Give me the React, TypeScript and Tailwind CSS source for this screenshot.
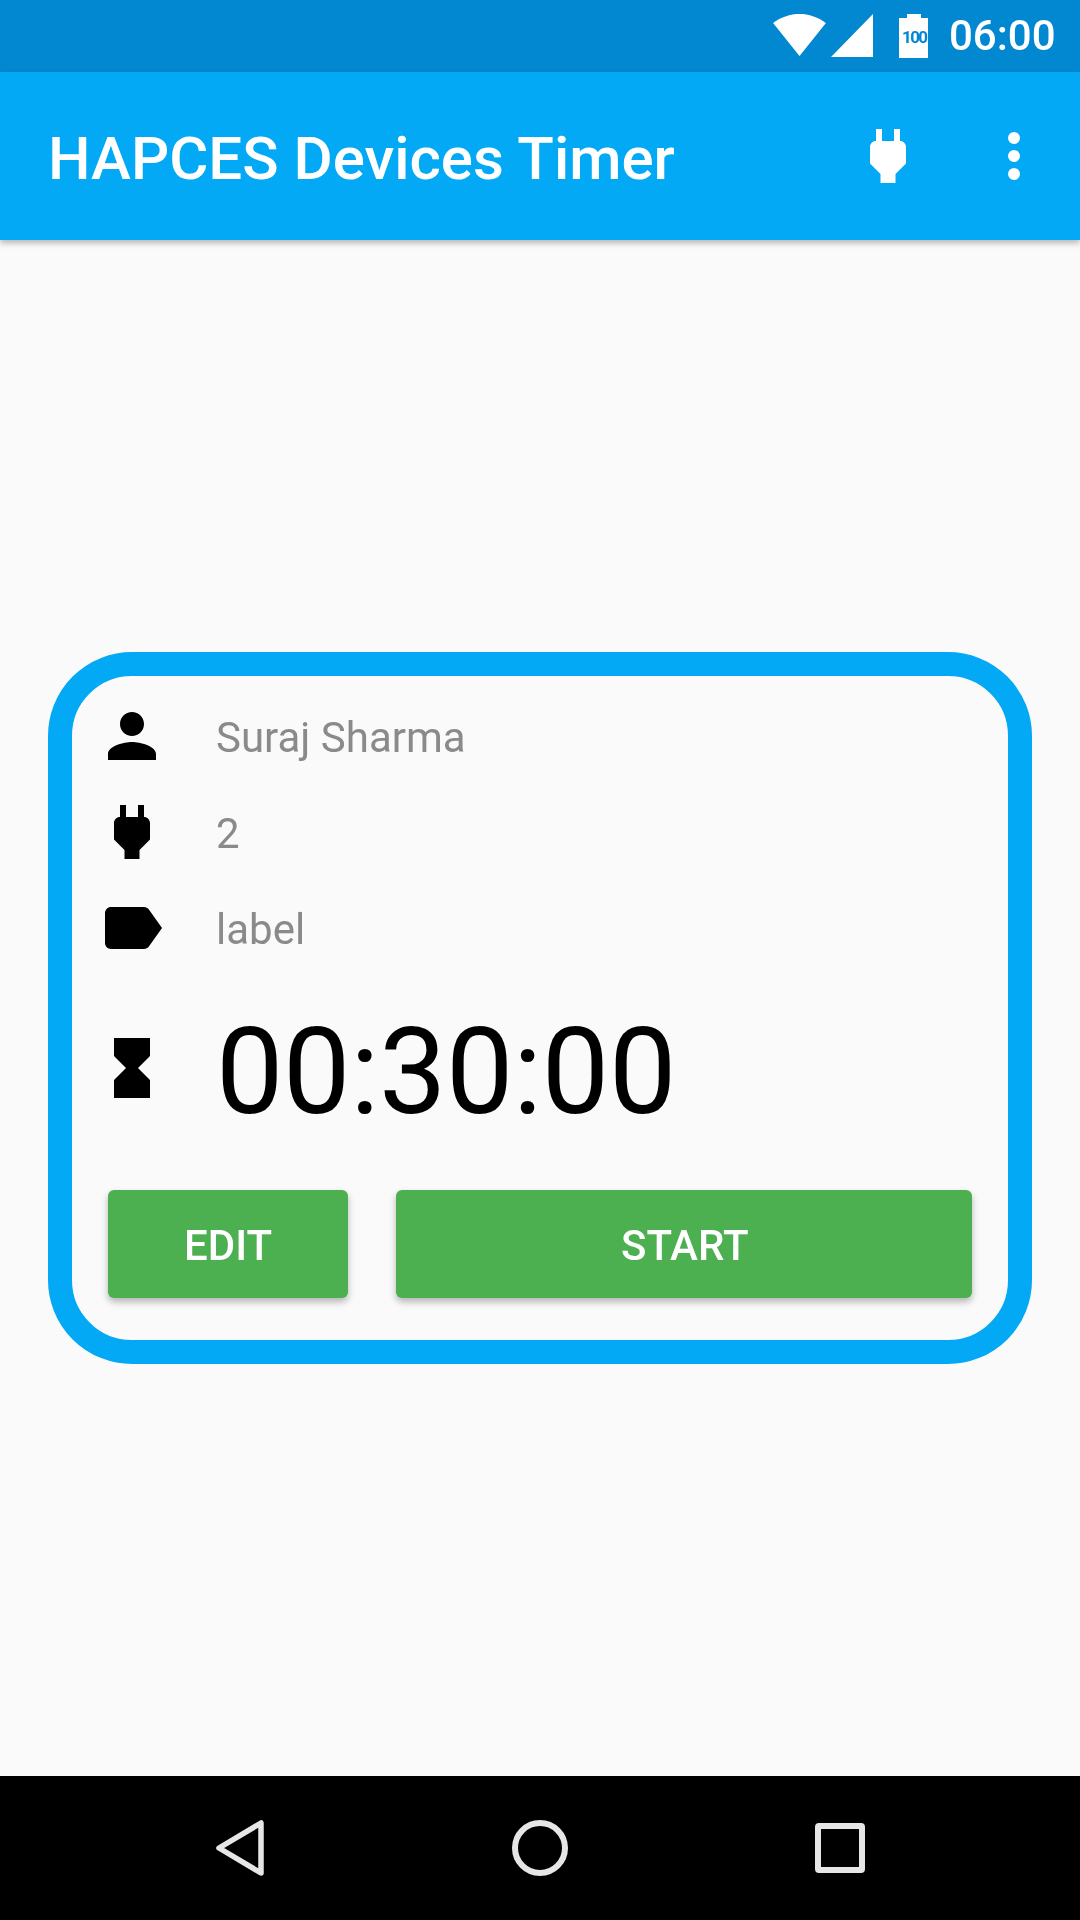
function PlugIcon({ className }: { className: string }) {
  return (
    <svg viewBox="0 0 24 24" className={className} fill="currentColor">
      <path d="M16 7V3h-2v4h-4V3H8v4h-.01C6.9 6.99 6 7.89 6 8.98v5.52L9.5 18v3h5v-3l3.5-3.5V9c0-1.1-.9-2-2-2z" />
    </svg>
  );
}

function StatusBar() {
  return (
    <div className="flex h-[72px] items-start justify-end bg-[#0288D1] pr-[24px] text-white">
      <svg viewBox="0.36 3 23.28 18.5" className="mt-[14px] h-[42px] w-[53px]" fill="currentColor">
        <path d="M12.01 21.49L23.64 7c-.45-.34-4.93-4-11.64-4C5.28 3 .81 6.66.36 7l11.63 14.49.01.01.01-.01z" />
      </svg>
      <svg viewBox="0 0 20 20" className="mt-[14px] ml-[5px] h-[43px] w-[42px]" fill="currentColor" preserveAspectRatio="none">
        <path d="M0 20h20V0z" />
      </svg>
      <div className="mt-[14px] ml-[26px] flex w-[29px] flex-col items-center">
        <div className="h-[4px] w-[14px] bg-white" />
        <div className="flex h-[40px] w-[29px] items-start justify-center bg-white pt-[10px] text-[17px] leading-[18px] font-bold tracking-[-1.6px] text-[#0288D1]">
          <span className="will-change-transform">100</span>
        </div>
      </div>
      <div className="mt-[11px] ml-[21px] text-[42px] leading-[50px] font-medium will-change-transform">06:00</div>
    </div>
  );
}

function AppBar() {
  return (
    <div className="relative z-10 flex h-[168px] items-center bg-[#03A9F4] pl-[48px] text-white shadow-[0_3px_6px_rgba(0,0,0,0.28)]">
      <h1 className="mt-[5px] flex-1 text-[60px] leading-[72px] font-medium will-change-transform">HAPCES Devices Timer</h1>
      <PlugIcon className="h-[72px] w-[72px]" />
      <div className="mr-[60px] ml-[84px] flex flex-col gap-[6px]">
        <div className="h-[12px] w-[12px] rounded-full bg-white" />
        <div className="h-[12px] w-[12px] rounded-full bg-white" />
        <div className="h-[12px] w-[12px] rounded-full bg-white" />
      </div>
    </div>
  );
}

function InfoRow({ icon, text }: { icon: React.ReactNode; text: string }) {
  return (
    <div className="flex h-[72px] items-center">
      {icon}
      <span className="mt-[4px] ml-[48px] text-[42px] leading-[50px] text-[#8a8a8a] will-change-transform">{text}</span>
    </div>
  );
}

function GreenButton({ width, label }: { width: string; label: string }) {
  return (
    <button className={`h-[108px] ${width} rounded-[6px] bg-[#4CAF50] pt-[2px] pl-[1px] text-[42px] font-medium text-white shadow-[0_4px_7px_rgba(0,0,0,0.28)]`}>
      <span className="inline-block will-change-transform">{label}</span>
    </button>
  );
}

function TimerCard() {
  return (
    <div className="flex h-[712px] w-[984px] flex-col gap-[24px] rounded-[84px] border-[24px] border-[#03A9F4] pt-[24px] pl-[24px]">
      <InfoRow
        text="Suraj Sharma"
        icon={
          <svg viewBox="0 0 24 24" className="h-[72px] w-[72px]" fill="black">
            <path d="M12 12c2.21 0 4-1.79 4-4s-1.79-4-4-4-4 1.79-4 4 1.79 4 4 4zm0 2c-2.67 0-8 1.34-8 4v2h16v-2c0-2.66-5.33-4-8-4z" />
          </svg>
        }
      />
      <InfoRow text="2" icon={<PlugIcon className="h-[72px] w-[72px] text-black" />} />
      <InfoRow
        text="label"
        icon={
          <svg viewBox="0 0 24 24" className="h-[72px] w-[72px]" fill="black">
            <path d="M17.63 5.84C17.27 5.33 16.67 5 16 5L5 5.01C3.9 5.01 3 5.9 3 7v10c0 1.1.9 1.99 2 1.99L16 19c.67 0 1.27-.33 1.63-.84L22 12l-4.37-6.16z" />
          </svg>
        }
      />
      <div className="mt-[44px] flex h-[72px] items-center">
        <svg viewBox="0 0 24 24" className="h-[72px] w-[72px]" fill="black">
          <path d="M6 2v6h.01L6 8.01 10 12l-4 4 .01.01H6V22h12v-5.99h-.01L18 16l-4-4 4-3.99-.01-.01H18V2H6z" />
        </svg>
        <span className="mt-[8px] ml-[48px] text-[120px] leading-[140px] tracking-[-0.35px] text-black will-change-transform">00:30:00</span>
      </div>
      <div className="mt-[62px] ml-[12px] flex gap-[48px]">
        <GreenButton width="w-[240px]" label="EDIT" />
        <GreenButton width="w-[576px]" label="START" />
      </div>
    </div>
  );
}

function NavBar() {
  return (
    <div className="flex h-[144px] items-center justify-center bg-black">
      <svg viewBox="0 0 50 56" className="h-[56px] w-[50px]" fill="none" stroke="#e6e6e6" strokeWidth="5.5" strokeLinejoin="round">
        <path d="M46 3V53L4 28Z" />
      </svg>
      <div className="ml-[247px] h-[56px] w-[56px] rounded-full border-[6px] border-[#e6e6e6]" />
      <div className="ml-[247px] h-[50px] w-[50px] rounded-[4px] border-[6px] border-[#e6e6e6]" />
    </div>
  );
}

export default function App() {
  return (
    <div className="flex h-[1920px] w-[1080px] flex-col bg-[#FAFAFA] font-[family-name:Roboto,sans-serif]">
      <StatusBar />
      <AppBar />
      <main className="flex flex-1 items-center justify-center">
        <TimerCard />
      </main>
      <NavBar />
    </div>
  );
}
